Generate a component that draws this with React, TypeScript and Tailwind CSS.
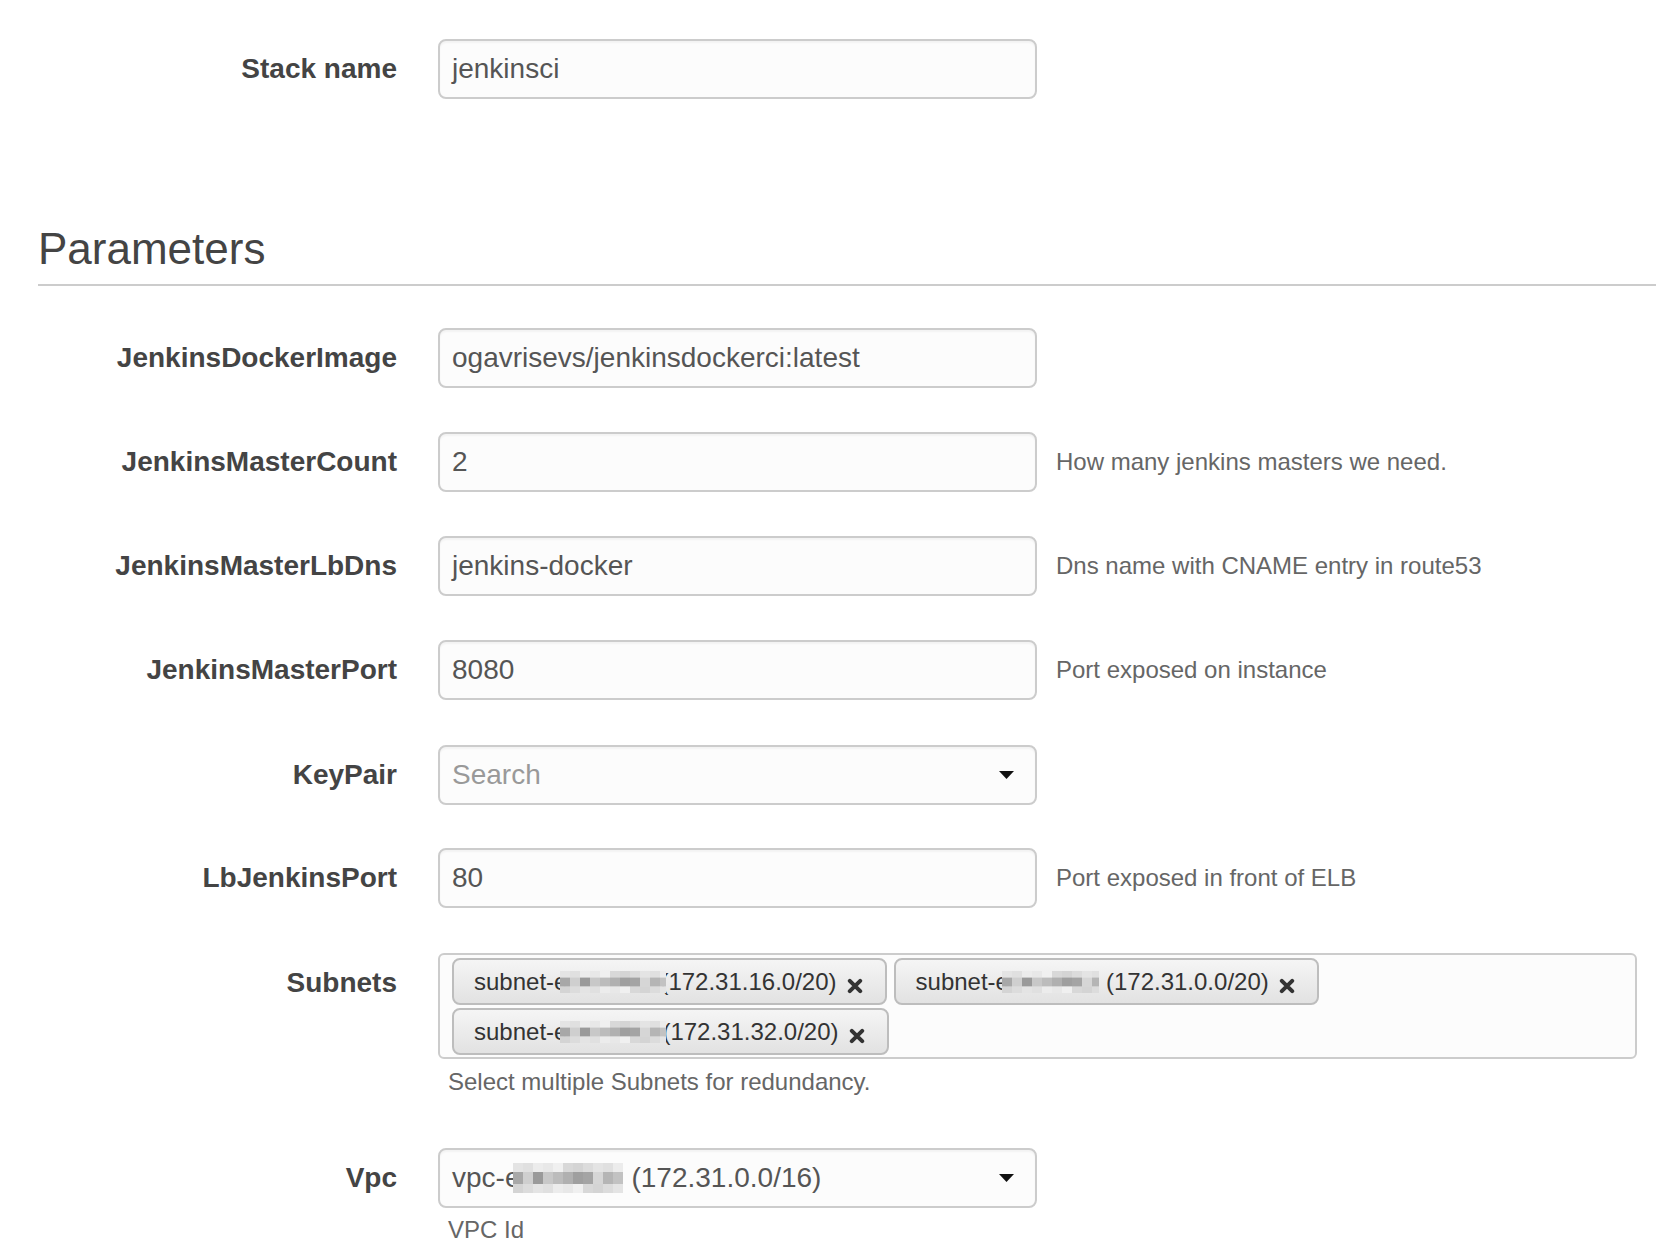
import React from "react";

const font = { fontFamily: '"Liberation Sans", Arial, Helvetica, sans-serif' };

// pixelated blur blocks that hide ids in the screenshot
const mid = ["#b5b5b5", "#9f9f9f", "#c8c8c8", "#a8a8a8", "#d6d6d6", "#b0b0b0", "#9a9a9a", "#c2c2c2", "#a4a4a4", "#bcbcbc", "#cfcfcf"];
const edge = ["#e4e4e4", "#d8d8d8", "#ececec", "#dcdcdc", "#f0f0f0", "#e0e0e0", "#d4d4d4", "#e8e8e8"];

function Mosaic({ width, height = 24 }: { width: number; height?: number }) {
  const cols = Math.ceil(width / 10);
  const rowH = [height * 0.3, height * 0.4, height * 0.3];
  let y = 0;
  return (
    <svg width={width} height={height} className="relative z-10 shrink-0" viewBox={`0 0 ${width} ${height}`}>
      {rowH.map((h, r) => {
        const top = y;
        y += h;
        return Array.from({ length: cols }).map((_, c) => {
          const fill = r === 1 ? mid[(c * 7 + 3) % mid.length] : edge[(c * 5 + r * 3) % edge.length];
          return <rect key={`${r}-${c}`} x={c * 10} y={top} width={10} height={h + 0.5} fill={fill} />;
        });
      })}
    </svg>
  );
}

function Cross() {
  return (
    <svg width="16" height="16" viewBox="0 0 16 16" className="shrink-0 mt-[8px]">
      <path d="M2.8 2.8 L13.2 13.2 M13.2 2.8 L2.8 13.2" stroke="#333" strokeWidth="4" strokeLinecap="round" />
    </svg>
  );
}

function Caret() {
  return (
    <svg width="15" height="8" viewBox="0 0 15 8" className="shrink-0">
      <path d="M0 0 H15 L7.5 8 Z" fill="#111" />
    </svg>
  );
}

function Label({ children }: { children: React.ReactNode }) {
  return (
    <div className="w-[397px] h-[60px] shrink-0 flex items-center justify-end text-[28px] font-bold text-[#444]">
      {children}
    </div>
  );
}

function TextInput({ value, placeholder, caret }: { value?: React.ReactNode; placeholder?: string; caret?: boolean }) {
  return (
    <div className="w-[599px] h-[60px] shrink-0 flex items-center justify-between pl-[12px] pr-[21px] border-2 border-[#cccccc] rounded-[8px] bg-[#fcfcfc] shadow-[inset_0_2px_2px_rgba(0,0,0,0.04)] text-[28px] text-[#555]">
      {value !== undefined ? (
        <div className="flex items-center whitespace-nowrap">{value}</div>
      ) : (
        <span className="text-[#999]">{placeholder}</span>
      )}
      {caret && <Caret />}
    </div>
  );
}

function Row({ label, children, hint, className = "" }: { label: string; children: React.ReactNode; hint?: string; className?: string }) {
  return (
    <div className={`flex items-start ${className}`}>
      <Label>{label}</Label>
      <div className="ml-[41px] flex items-start">
        {children}
        {hint && <div className="ml-[19px] h-[60px] flex items-center text-[24px] text-[#666] whitespace-nowrap">{hint}</div>}
      </div>
    </div>
  );
}

function Chip({ cidr, blur, gap }: { cidr: string; blur: number; gap: number }) {
  return (
    <div className="h-[47px] flex items-center pl-[20px] pr-[22px] border-2 border-[#bdbdbd] rounded-[8px] bg-gradient-to-b from-[#f5f5f5] to-[#e2e2e2] text-[24px] text-[#333] whitespace-nowrap">
      <span>subnet-e</span>
      <div className="ml-[-7px]">
        <Mosaic width={blur} height={22} />
      </div>
      <span style={{ marginLeft: gap }}>{cidr}</span>
      <span className="ml-[10px] flex">
        <Cross />
      </span>
    </div>
  );
}

export default function App() {
  return (
    <div className="w-[1656px] h-[1250px] bg-white overflow-hidden" style={font}>
      <div className="pt-[39px]">
        <Row label="Stack name">
          <TextInput value="jenkinsci" />
        </Row>
      </div>

      <div className="ml-[38px] mt-[128px] pb-[13px] border-b-2 border-[#cccccc]">
        <h2 className="text-[44px] leading-[44px] text-[#444]">Parameters</h2>
      </div>

      <div className="mt-[42px] flex flex-col">
        <Row label="JenkinsDockerImage">
          <TextInput value="ogavrisevs/jenkinsdockerci:latest" />
        </Row>
        <Row label="JenkinsMasterCount" hint="How many jenkins masters we need." className="mt-[44px]">
          <TextInput value="2" />
        </Row>
        <Row label="JenkinsMasterLbDns" hint="Dns name with CNAME entry in route53" className="mt-[44px]">
          <TextInput value="jenkins-docker" />
        </Row>
        <Row label="JenkinsMasterPort" hint="Port exposed on instance" className="mt-[44px]">
          <TextInput value="8080" />
        </Row>
        <Row label="KeyPair" className="mt-[45px]">
          <TextInput placeholder="Search" caret />
        </Row>
        <Row label="LbJenkinsPort" hint="Port exposed in front of ELB" className="mt-[43px]">
          <TextInput value="80" />
        </Row>

        <div className="mt-[45px] flex items-start">
          <Label>Subnets</Label>
          <div className="ml-[41px] flex flex-col">
            <div className="w-[1199px] h-[106px] border-2 border-[#cccccc] rounded-[6px] bg-[#fcfcfc] pl-[12px] pt-[3px] flex flex-wrap content-start gap-x-[7px] gap-y-[3px]">
              <Chip cidr="(172.31.16.0/20)" blur={106} gap={-6} />
              <Chip cidr="(172.31.0.0/20)" blur={97} gap={7} />
              <Chip cidr="(172.31.32.0/20)" blur={106} gap={-4} />
            </div>
            <div className="mt-[6px] pl-[10px] text-[24px] leading-[34px] text-[#666]">
              Select multiple Subnets for redundancy.
            </div>
          </div>
        </div>

        <div className="mt-[49px] flex items-start">
          <Label>Vpc</Label>
          <div className="ml-[41px] flex flex-col">
            <TextInput
              caret
              value={
                <>
                  <span>vpc-e</span>
                  <div className="ml-[-7px]">
                    <Mosaic width={110} height={30} />
                  </div>
                  <span className="ml-[8px]">(172.31.0.0/16)</span>
                </>
              }
            />
            <div className="mt-[5px] pl-[10px] text-[24px] leading-[34px] text-[#666]">VPC Id</div>
          </div>
        </div>
      </div>
    </div>
  );
}
